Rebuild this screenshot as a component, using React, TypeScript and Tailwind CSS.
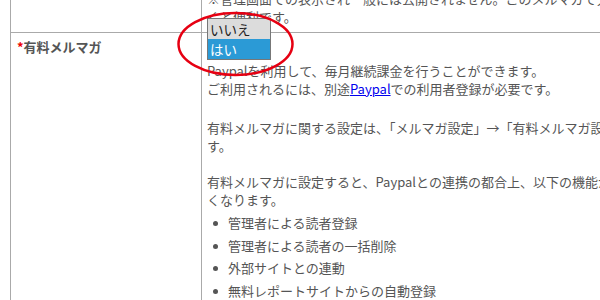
const features = [
  '管理者による読者登録',
  '管理者による読者の一括削除',
  '外部サイトとの連動',
  '無料レポートサイトからの自動登録',
]

export default function App() {
  return (
    <div className="relative h-[300px] w-[600px] overflow-hidden bg-white font-['Noto_Sans_CJK_JP',sans-serif] text-[13px] leading-[18px] text-[#555]">
      <div className="-mt-[10px] ml-[10px] w-[900px] border-l border-[#aaa]">
        {/* previous row */}
        <div className="grid grid-cols-[191px_1fr] border-b border-[#aaa]">
          <div className="border-r border-[#aaa]" />
          <div className="whitespace-nowrap pb-[6px] pl-[5px]">
            ※管理画面での表示され一般には公開されません。このメルマガで分かりやすい名前をつけてお
            <br />
            くと便利です。
          </div>
        </div>

        {/* paid mail magazine row */}
        <div className="grid grid-cols-[191px_1fr]">
          <div className="border-r border-[#aaa] pl-[6px] pt-[5px] font-bold">
            <span className="text-[#e00]">*</span>有料メルマガ
          </div>
          <div className="relative whitespace-nowrap pl-[5px] pt-[5px]">
            <div className="h-[22px] w-[64px]" />
            <div className="mt-[2px]">
              Paypalを利用して、毎月継続課金を行うことができます。
              <br />
              ご利用されるには、別途
              <a href="#" className="text-[#0000ee] underline">
                Paypal
              </a>
              での利用者登録が必要です。
            </div>
            <p className="mt-[21px]">
              有料メルマガに関する設定は、「メルマガ設定」→「有料メルマガ設定」から行うことができま
              <br />
              す。
            </p>
            <p className="mt-[18px]">
              有料メルマガに設定すると、Paypalとの連携の都合上、以下の機能がご利用いただけな
              <br />
              くなります。
            </p>
            <ul className="mt-[3px]">
              {features.map((f) => (
                <li key={f} className="flex items-center leading-[22.7px]">
                  <span className="ml-[6px] mr-[10px] h-[5px] w-[5px] rounded-full bg-[#555]" />
                  {f}
                </li>
              ))}
            </ul>
          </div>
        </div>
      </div>

      {/* open select list */}
      <div className="absolute left-[207px] top-[18px] w-[64px] border border-[#777] bg-white text-[13.5px] leading-[20px]">
        <div className="bg-[#dcdcdc] pl-[2px] text-[#222]">いいえ</div>
        <div className="bg-[#2b9ad6] pl-[2px] text-white">はい</div>
      </div>

      {/* red annotation circle */}
      <svg className="absolute left-0 top-0" width="600" height="300">
        <ellipse cx="235.5" cy="44" rx="57" ry="31" fill="none" stroke="#e60012" strokeWidth="2.5" />
      </svg>
    </div>
  )
}
